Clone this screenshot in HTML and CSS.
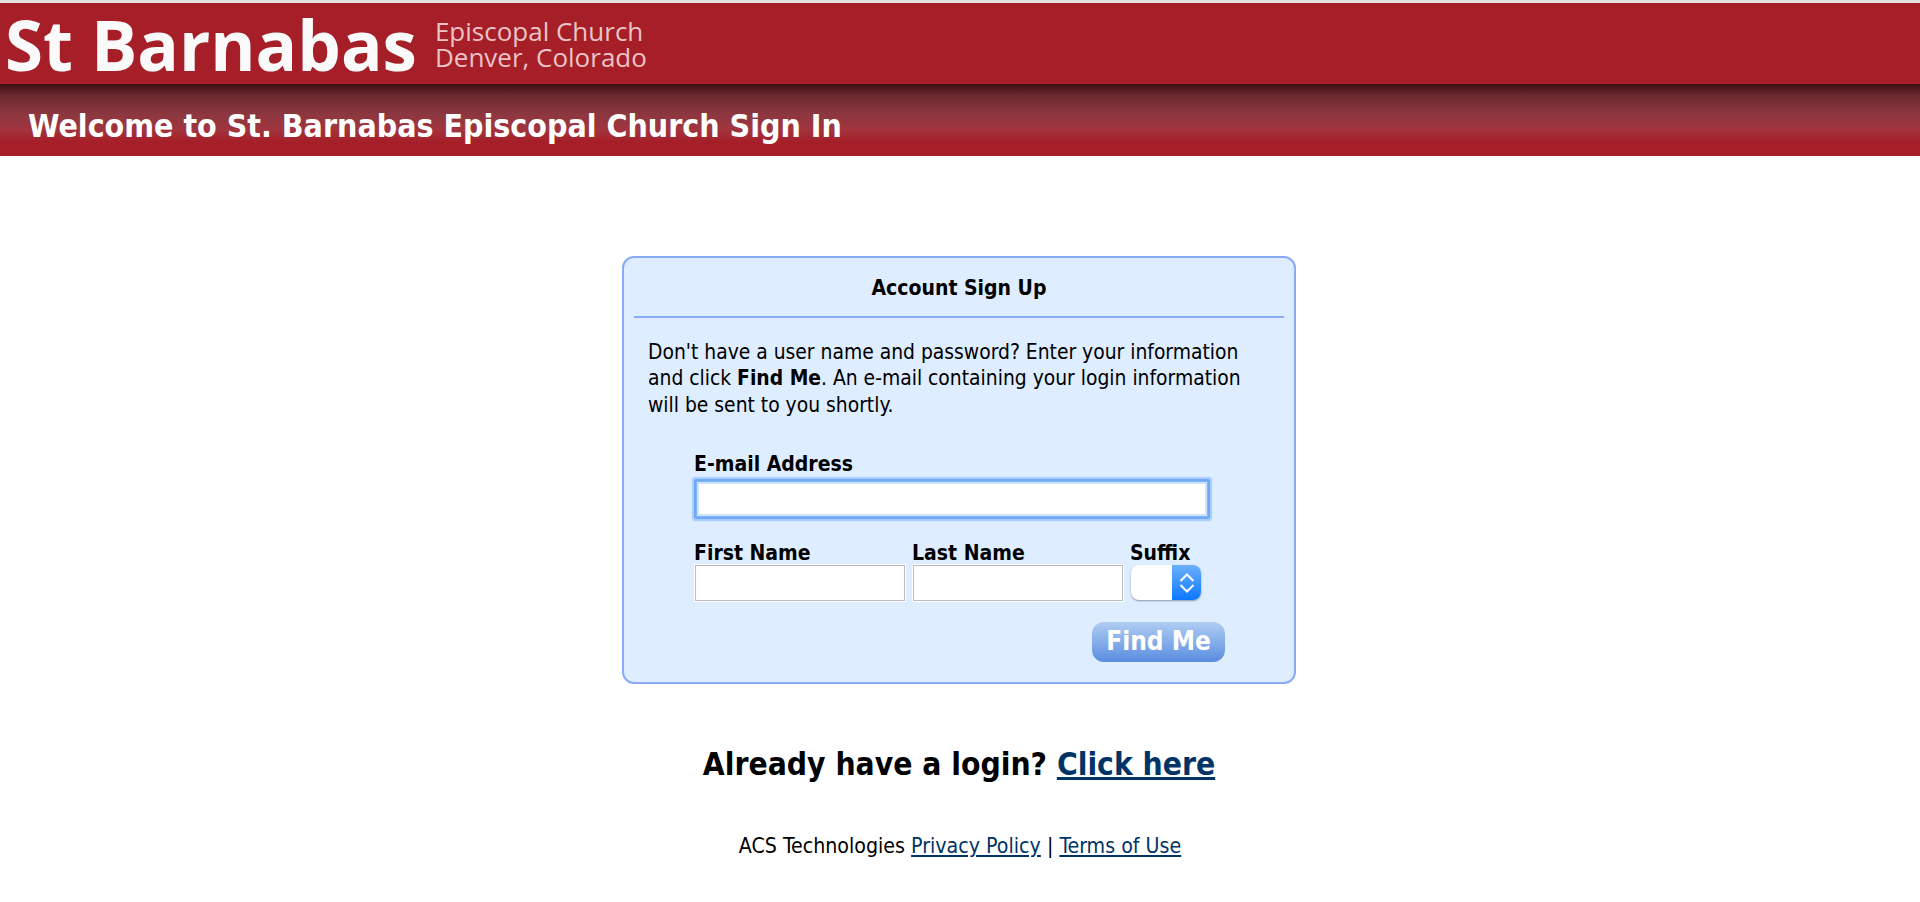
FILE: index.html
```html
<!DOCTYPE html>
<html lang="en">
<head>
<meta charset="utf-8">
<title>St. Barnabas Episcopal Church Sign In</title>
<link rel="stylesheet" href="styles.css">
</head>
<body>
<header class="brand">
  <span class="brand-name">St Barnabas</span>
  <span class="brand-sub">Episcopal Church<br>Denver, Colorado</span>
</header>
<div class="title-bar"><h1>Welcome to St. Barnabas Episcopal Church Sign In</h1></div>
<main class="main">
  <section class="card">
    <h2 class="card-title">Account Sign Up</h2>
    <p class="intro">Don't have a user name and password? Enter your information<br>and click <b>Find Me</b>. An e-mail containing your login information<br>will be sent to you shortly.</p>
    <form class="form">
      <label class="label" for="email">E-mail Address</label>
      <input class="input input-focus" id="email" type="text">
      <div class="name-row">
        <div class="field">
          <label class="label" for="first">First Name</label>
          <input class="input" id="first" type="text">
        </div>
        <div class="field">
          <label class="label" for="last">Last Name</label>
          <input class="input" id="last" type="text">
        </div>
        <div class="field">
          <span class="label">Suffix</span>
          <div class="select">
            <span class="select-arrows">
              <svg width="16" height="24" viewBox="0 0 16 24" fill="none" stroke="#fff" stroke-width="2"><path d="M1.5 10 8 3.5l6.5 6.5"/><path d="M1.5 14 8 20.5l6.5-6.5"/></svg>
            </span>
          </div>
        </div>
      </div>
      <div class="actions"><button class="button" type="button">Find Me</button></div>
    </form>
  </section>
  <p class="login">Already have a login? <a href="#">Click here</a></p>
  <p class="footer">ACS Technologies <a href="#">Privacy Policy</a> | <a href="#">Terms of Use</a></p>
</main>
</body>
</html>
```

FILE: styles.css
```css
* { box-sizing: border-box; }
html, body { margin: 0; padding: 0; }
body {
  background: #fff;
  color: #000;
  font-family: "DejaVu Sans Condensed", "DejaVu Sans", sans-serif;
  font-size: 21px;
}
.brand {
  height: 84px;
  border-top: 3px solid #e2e2e2;
  background: #a61e27;
  color: #fff;
  display: flex;
  align-items: center;
  padding: 1px 0 0 5px;
}
.brand-name {
  font-family: "Open Sans", sans-serif;
  font-weight: 700;
  font-size: 69px;
  line-height: 70px;
  color: #fafafa;
}
.brand-sub {
  font-family: "Open Sans", sans-serif;
  font-size: 26px;
  line-height: 26px;
  margin-left: 18px;
  color: #e9c3c5;
}
.title-bar {
  height: 72px;
  background: linear-gradient(#3d0d11 0, #6d2a30 12px, #8c3740 30px, #a2343e 46px, #a61e27 58px, #a61e27 100%);
  display: flex;
  align-items: center;
  padding: 11px 0 0 28px;
}
.title-bar h1 {
  margin: 0;
  color: #fff;
  font-size: 31.8px;
  font-weight: 700;
}
.main {
  display: flex;
  flex-direction: column;
  align-items: center;
  padding-top: 100px;
}
.card {
  width: 674px;
  height: 428px;
  margin-left: -2px;
  background: #deedff;
  border: 2px solid #8aabf8;
  border-radius: 12px;
  padding: 0 10px;
}
.card-title {
  margin: 0;
  height: 60px;
  line-height: 60px;
  text-align: center;
  font-size: 21px;
  font-weight: 700;
  border-bottom: 2px solid #8aabf8;
}
.intro {
  margin: 0;
  padding: 21px 14px 0;
  font-size: 20.85px;
  line-height: 26.4px;
}
.form {
  padding: 34px 0 0 60px;
}
.label {
  display: block;
  font-size: 21px;
  font-weight: 700;
  line-height: 24px;
}
.input {
  display: block;
  width: 210px;
  height: 36px;
  margin: 0 0 0 1px;
  background: #fff;
  border: 1px solid #bcbcbc;
  outline: 1px solid #fff;
  padding: 0;
}
.input-focus {
  width: 512px;
  margin: 5px 0 0 2px;
  border: 1px solid #7fb4fb;
  outline: none;
  box-shadow: 0 0 0 2px #6fa9f6, 0 0 1px 4px #a5ccfc, inset 0 0 0 2px #cfe3fd;
  border-radius: 1px;
}
.name-row {
  display: flex;
  margin-top: 24px;
}
.field { width: 218px; }
.field:last-child { width: auto; }
.select {
  width: 70px;
  height: 35px;
  margin-left: 1px;
  background: #fff;
  border-radius: 8px;
  box-shadow: 0 1px 2px #8f98a6;
  overflow: hidden;
  display: flex;
  justify-content: flex-end;
}
.select-arrows {
  width: 29px;
  background: linear-gradient(#6cb0ff, #0a78ff);
  display: flex;
  align-items: center;
  justify-content: center;
}
.actions {
  display: flex;
  justify-content: flex-end;
  margin-top: 21px;
  padding-right: 59px;
}
.button {
  width: 133px;
  height: 40px;
  padding: 0 0 2px;
  border: 0;
  border-radius: 12px;
  background: linear-gradient(#b0cdf3, #5a8de0);
  color: #fff;
  font-family: inherit;
  font-size: 26px;
  font-weight: 700;
}
.login {
  margin: 60px 2px 0 0;
  font-size: 31.5px;
  font-weight: 700;
  line-height: 40px;
}
a { color: #003366; }
.footer {
  margin: 50px 0 0;
  font-size: 21.2px;
  line-height: 24px;
}
```
